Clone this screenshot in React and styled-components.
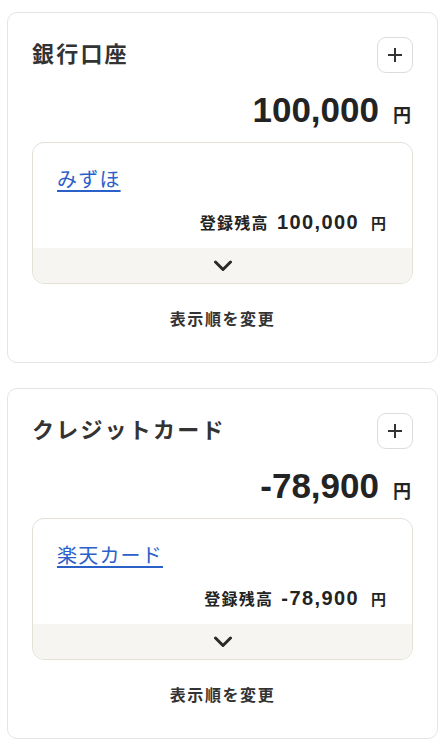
import React from "react";
import styled, { createGlobalStyle } from "styled-components";

const GlobalStyle = createGlobalStyle`
  body {
    margin: 0;
    background: #ffffff;
    color: #333333;
    font-family: "Liberation Sans", "Noto Sans CJK JP", sans-serif;
  }
`;

const accounts = [
  {
    title: "銀行口座",
    total: "100,000",
    items: [{ name: "みずほ", balance: "100,000" }],
  },
  {
    title: "クレジットカード",
    total: "-78,900",
    items: [{ name: "楽天カード", balance: "-78,900" }],
  },
];

const PlusIcon = () => (
  <svg width="16" height="16" viewBox="0 0 16 16" fill="none">
    <path d="M8 1v14M1 8h14" stroke="#333" strokeWidth="2" />
  </svg>
);

const ChevronIcon = () => (
  <svg width="20" height="12" viewBox="0 0 20 12" fill="none">
    <polyline
      points="2.5,2 10,9.5 17.5,2"
      stroke="#2a2a2a"
      strokeWidth="3"
      strokeLinecap="round"
      strokeLinejoin="round"
    />
  </svg>
);

const App = () => {
  return (
    <Page>
      <GlobalStyle />
      {accounts.map((group, key) => (
        <Card key={key}>
          <Header>
            <Title>{group.title}</Title>
            <AddButton aria-label="追加">
              <PlusIcon />
            </AddButton>
          </Header>
          <TotalRow>
            <TotalNumber>{group.total}</TotalNumber>
            <Yen big>円</Yen>
          </TotalRow>
          {group.items.map((item, i) => (
            <ItemBox key={i}>
              <ItemBody>
                <ItemLine>
                  <ItemLink href="#">{item.name}</ItemLink>
                </ItemLine>
                <BalanceRow>
                  <BalanceLabel>登録残高</BalanceLabel>
                  <BalanceNumber>{item.balance}</BalanceNumber>
                  <Yen>円</Yen>
                </BalanceRow>
              </ItemBody>
              <ItemFooter>
                <ChevronIcon />
              </ItemFooter>
            </ItemBox>
          ))}
          <SortButton>表示順を変更</SortButton>
        </Card>
      ))}
    </Page>
  );
};

const Page = styled.div`
  display: flex;
  flex-direction: column;
  gap: 25px;
  padding: 12px 7px 12px 7px;
`;

const Card = styled.section`
  background: #ffffff;
  border: 1px solid #e4e4e4;
  border-radius: 10px;
  padding: 24px 24px 22px;
`;

const Header = styled.div`
  display: flex;
  align-items: center;
  justify-content: space-between;
  height: 36px;
`;

const Title = styled.h2`
  margin: 0;
  font-size: 22px;
  line-height: 36px;
  font-weight: 700;
  letter-spacing: 0.1em;
  color: #333333;
`;

const AddButton = styled.button`
  width: 36px;
  height: 36px;
  display: flex;
  align-items: center;
  justify-content: center;
  padding: 0;
  background: #ffffff;
  border: 1px solid #dcdcdc;
  border-radius: 9px;
`;

const TotalRow = styled.div`
  display: flex;
  justify-content: flex-end;
  align-items: baseline;
  gap: 14px;
  height: 42px;
  margin-top: 16px;
  line-height: 42px;
  overflow: hidden;
`;

const TotalNumber = styled.span`
  font-size: 35px;
  font-weight: 700;
  color: #232323;
`;

const Yen = styled.span`
  font-size: ${(props) => (props.big ? "18px" : "15px")};
  font-weight: 700;
  color: #232323;
  margin-right: ${(props) => (props.big ? "2px" : "0")};
`;

const ItemBox = styled.div`
  margin-top: 11px;
  border: 1px solid #e4e0d6;
  border-radius: 12px;
  overflow: hidden;
`;

const ItemBody = styled.div`
  padding: 22px 26px 11px 24px;
`;

const ItemLine = styled.div`
  height: 30px;
  line-height: 30px;
`;

const ItemLink = styled.a`
  font-size: 20px;
  line-height: 30px;
  letter-spacing: 0.06em;
  color: #2c60c9;
  text-decoration: underline;
  text-underline-offset: 3px;
`;

const BalanceRow = styled.div`
  display: flex;
  justify-content: flex-end;
  align-items: baseline;
  height: 30px;
  margin-top: 12px;
  line-height: 30px;
  font-weight: 700;
  color: #232323;
`;

const BalanceLabel = styled.span`
  font-size: 16px;
  letter-spacing: 0.08em;
`;

const BalanceNumber = styled.span`
  font-size: 20px;
  letter-spacing: 0.07em;
  margin-left: 8px;
  margin-right: 12px;
`;

const ItemFooter = styled.div`
  height: 35px;
  display: flex;
  align-items: center;
  justify-content: center;
  background: #f6f5f1;
`;

const SortButton = styled.div`
  margin-top: 16px;
  padding: 8px 0;
  height: 24px;
  text-align: center;
  font-size: 16px;
  line-height: 24px;
  font-weight: 700;
  letter-spacing: 0.1em;
  color: #333333;
`;

export default App;
